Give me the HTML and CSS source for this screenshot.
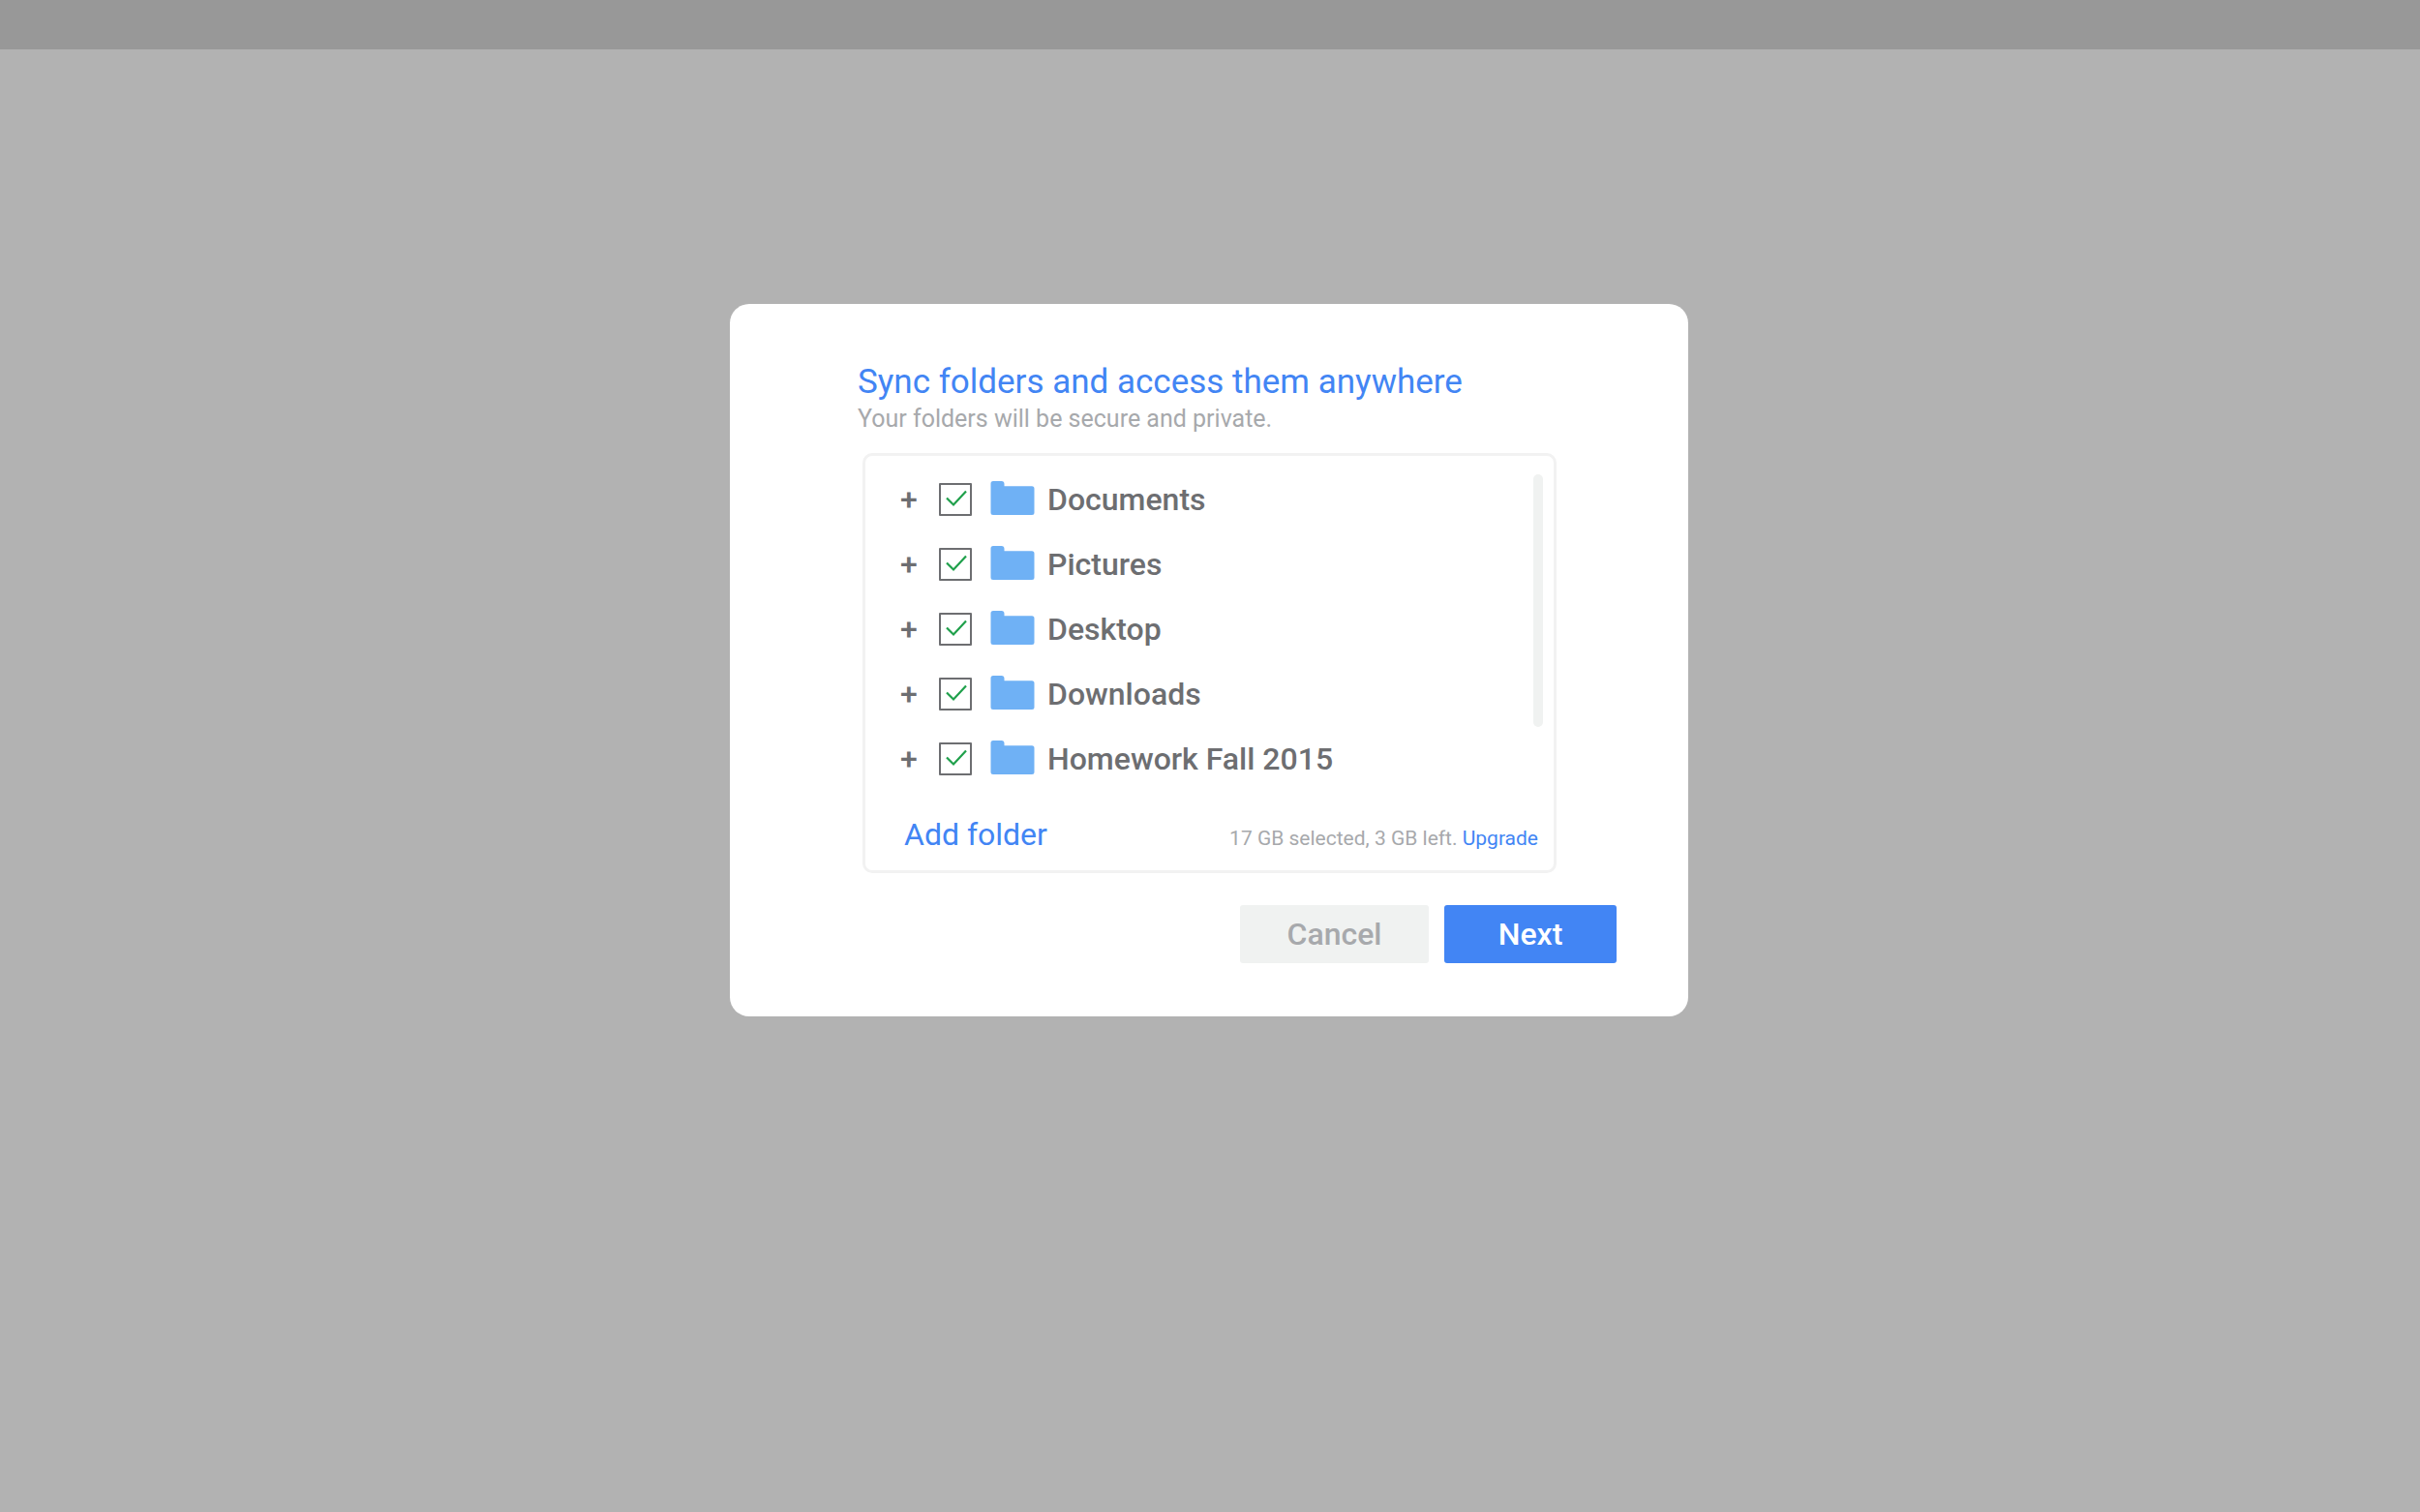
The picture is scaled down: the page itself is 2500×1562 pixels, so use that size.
FILE: index.html
```html
<!DOCTYPE html>
<html lang="en">
<head>
  <meta charset="utf-8">
  <meta name="viewport" content="width=device-width, initial-scale=1">
  <title>Sync folders</title>
  <link rel="stylesheet" href="styles.css">
</head>
<body>
  <svg class="sprite" aria-hidden="true">
    <symbol id="folder" viewBox="0 0 46 36">
      <path d="M3 0h8.500a3 3 0 0 1 3 3v2.200H43a2.500 2.500 0 0 1 2.500 2.500V32.500a2.500 2.500 0 0 1-2.500 2.500H3A2.500 2.500 0 0 1 .5 32.500V2.500A2.500 2.500 0 0 1 3 0z" fill="#6fb1f5"/>
    </symbol>
    <symbol id="check" viewBox="0 0 34 34">
      <path d="M8 15.500l7 7L28 8.500" fill="none" stroke="#1fa04b" stroke-width="2.200"/>
    </symbol>
  </svg>
  <header class="topbar"></header>
  <main class="stage">
    <section class="dialog" aria-labelledby="title">
      <h1 class="title" id="title">Sync folders and access them anywhere</h1>
      <p class="subtitle">Your folders will be secure and private.</p>
      <div class="panel">
        <div class="panel-body">
          <ul class="folders">
            <li class="row">
              <button class="expand" type="button" aria-label="Expand Documents">+</button>
              <span class="tick"><input class="box" type="checkbox" id="documents" checked><svg class="mark" aria-hidden="true"><use href="#check"/></svg></span>
              <svg class="folder" aria-hidden="true"><use href="#folder"/></svg>
              <label class="name" for="documents">Documents</label>
            </li>
            <li class="row">
              <button class="expand" type="button" aria-label="Expand Pictures">+</button>
              <span class="tick"><input class="box" type="checkbox" id="pictures" checked><svg class="mark" aria-hidden="true"><use href="#check"/></svg></span>
              <svg class="folder" aria-hidden="true"><use href="#folder"/></svg>
              <label class="name" for="pictures">Pictures</label>
            </li>
            <li class="row">
              <button class="expand" type="button" aria-label="Expand Desktop">+</button>
              <span class="tick"><input class="box" type="checkbox" id="desktop" checked><svg class="mark" aria-hidden="true"><use href="#check"/></svg></span>
              <svg class="folder" aria-hidden="true"><use href="#folder"/></svg>
              <label class="name" for="desktop">Desktop</label>
            </li>
            <li class="row">
              <button class="expand" type="button" aria-label="Expand Downloads">+</button>
              <span class="tick"><input class="box" type="checkbox" id="downloads" checked><svg class="mark" aria-hidden="true"><use href="#check"/></svg></span>
              <svg class="folder" aria-hidden="true"><use href="#folder"/></svg>
              <label class="name" for="downloads">Downloads</label>
            </li>
            <li class="row">
              <button class="expand" type="button" aria-label="Expand Homework Fall 2015">+</button>
              <span class="tick"><input class="box" type="checkbox" id="homework" checked><svg class="mark" aria-hidden="true"><use href="#check"/></svg></span>
              <svg class="folder" aria-hidden="true"><use href="#folder"/></svg>
              <label class="name" for="homework">Homework Fall 2015</label>
            </li>
          </ul>
          <div class="scrollbar"></div>
        </div>
        <div class="panel-foot">
          <button class="add" type="button">Add folder</button>
          <p class="storage">17 GB selected, 3 GB left. <a class="upgrade" href="#upgrade">Upgrade</a></p>
        </div>
      </div>
      <div class="actions">
        <button class="button cancel" type="button">Cancel</button>
        <button class="button next" type="button">Next</button>
      </div>
    </section>
  </main>
</body>
</html>
```
FILE: styles.css
```css
* {
  box-sizing: border-box;
}

body {
  margin: 0;
  min-height: 100vh;
  background: #b2b2b2;
  font-family: Roboto, "Liberation Sans", sans-serif;
}

button {
  padding: 0;
  border: 0;
  background: none;
  font: inherit;
  cursor: pointer;
}

.sprite {
  display: none;
}

.topbar {
  height: 51px;
  background: #989898;
}

.stage {
  display: flex;
  justify-content: center;
  align-items: flex-start;
  padding: 263px 18px 64px 16px;
}

.dialog {
  width: 100%;
  max-width: 990px;
  padding: 60px 74px 55px 132px;
  border-radius: 20px;
  background: #fff;
}

.title {
  margin: 0;
  color: #4285f4;
  font-size: 35px;
  font-weight: 400;
  line-height: 42px;
}

.subtitle {
  margin: 2px 0 20px;
  color: #a7a9ac;
  font-size: 25px;
  line-height: 30px;
}

.panel {
  margin: 0 62px 0 5px;
  padding: 11px 16px 10px 36px;
  border: 3px solid #f2f2f2;
  border-radius: 10px;
}

.panel-body {
  display: flex;
  justify-content: space-between;
  align-items: flex-start;
}

.folders {
  margin: 0;
  padding: 0;
  list-style: none;
}

.row {
  display: flex;
  align-items: center;
  height: 67px;
  color: #6d6e71;
  font-size: 32px;
  font-weight: 500;
  line-height: 38px;
}

.expand {
  width: 18px;
  margin-right: 22px;
  color: inherit;
}

.tick {
  display: grid;
  width: 34px;
  height: 34px;
  margin-right: 19px;
}

.box,
.mark {
  grid-area: 1 / 1;
  width: 34px;
  height: 34px;
  margin: 0;
}

.box {
  appearance: none;
  border: 2px solid #6d6e71;
  border-radius: 1px;
}

.mark {
  visibility: hidden;
  pointer-events: none;
}

.box:checked + .mark {
  visibility: visible;
}

.folder {
  width: 46px;
  height: 36px;
  margin: 0 13px 2px 0;
}

.scrollbar {
  width: 10px;
  height: 261px;
  margin: 8px -5px 0 0;
  border-radius: 5px;
  background: #f0f2f1;
}

.panel-foot {
  display: flex;
  justify-content: space-between;
  align-items: baseline;
  padding: 26px 0 8px 4px;
}

.add {
  color: #4285f4;
  font-size: 32px;
  line-height: 38px;
}

.storage {
  margin: 0;
  color: #a7a9ac;
  font-size: 21px;
  line-height: 26px;
}

.upgrade {
  color: #4285f4;
  text-decoration: none;
}

.actions {
  display: flex;
  justify-content: flex-end;
  gap: 16px;
  margin-top: 33px;
}

.button {
  height: 60px;
  border-radius: 3px;
  font-size: 32px;
  font-weight: 500;
  line-height: 38px;
}

.cancel {
  width: 195px;
  background: #f0f2f1;
  color: #a7a9ac;
}

.next {
  width: 178px;
  background: #4285f4;
  color: #fff;
}
```
